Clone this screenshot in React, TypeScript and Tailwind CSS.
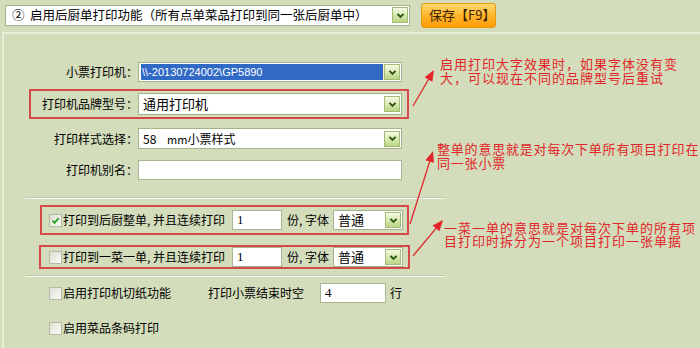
const cjk = "font-['Noto_Sans_CJK_SC','Noto_Sans',sans-serif]";

function DropBtn() {
  return (
    <span className="flex h-[16px] w-[16px] shrink-0 items-center justify-center border border-[#a3bb76] bg-gradient-to-b from-[#f6fbe2] to-[#bcd684]">
      <svg viewBox="0 0 10 10" className="h-[9px] w-[9px]">
        <path d="M1.6 3.2 L5 6.6 L8.4 3.2" fill="none" stroke="#2c5812" strokeWidth="2.2" />
      </svg>
    </span>
  );
}

function Select({ className, children }: { className: string; children?: React.ReactNode }) {
  return (
    <div className={`flex shrink-0 items-center border border-[#a2b488] bg-white pl-[2px] pr-[1px] ${className}`}>
      <div className="flex min-w-0 flex-1 items-center overflow-hidden whitespace-nowrap">{children}</div>
      <DropBtn />
    </div>
  );
}

function Input({ className, value }: { className: string; value?: string }) {
  return (
    <div className={`flex shrink-0 items-center border border-[#a8b592] bg-white pl-[4px] font-['Liberation_Serif',serif] text-[13px] text-black ${className}`}>
      {value}
    </div>
  );
}

function Check({ checked }: { checked?: boolean }) {
  return (
    <span className="flex h-[13px] w-[13px] shrink-0 items-center justify-center border border-[#b3baa5] bg-gradient-to-br from-[#dedfd4] to-[#fbfbf7]">
      {checked && (
        <svg viewBox="0 0 10 10" className="h-[9px] w-[9px]">
          <path d="M1.5 5 L4 7.6 L8.6 2.2" fill="none" stroke="#21a121" strokeWidth="2" />
        </svg>
      )}
    </span>
  );
}

function arrow(x1: number, y1: number, x2: number, y2: number) {
  const dx = x2 - x1;
  const dy = y2 - y1;
  const len = Math.hypot(dx, dy);
  const ux = dx / len;
  const uy = dy / len;
  const bx = x2 - ux * 11;
  const by = y2 - uy * 11;
  const px = -uy * 4.5;
  const py = ux * 4.5;
  return {
    line: { x1, y1, x2: bx + ux * 2, y2: by + uy * 2 },
    head: `${x2},${y2} ${bx + px},${by + py} ${bx - px},${by - py}`,
  };
}

const arrows = [arrow(413, 106, 434, 70), arrow(410, 224, 433, 151), arrow(413, 256, 443, 220)];

export default function App() {
  return (
    <div className={`relative h-[348px] w-[700px] overflow-hidden bg-[#d3ddbb] text-[12px] text-black ${cjk}`}>
      {/* top bar */}
      <div className="flex h-[30px] items-center">
        <Select className="ml-[5px] h-[21px] w-[405px] border-[#8fa170]">
          <span className="pl-[4px] text-[12.5px]">② &nbsp;启用后厨单打印功能（所有点单菜品打印到同一张后厨单中）</span>
        </Select>
        <button className="ml-[11px] flex h-[25px] w-[75px] items-center rounded-[3px] border border-[#e59a12] bg-gradient-to-b from-[#ffd86a] via-[#ffb52a] to-[#ff9c00] pl-[7px] text-[13px] text-[#3b2300]">
          保存【F9】
        </button>
      </div>

      {/* panel */}
      <div className="ml-[2px] mt-[2px] h-[320px] border-l-2 border-t-2 border-[#e8eed8]">
        <div className="mt-[28px] flex h-[20px] items-center">
          <span className="w-[134px] text-right">小票打印机：</span>
          <Select className="h-[20px] w-[264px]">
            <span className="mr-[1px] flex h-[16px] flex-1 items-center bg-[#316ac5] pl-[1px] font-['Liberation_Sans',sans-serif] text-[11px] text-white outline-1 outline-dotted outline-[#e8e0a0]">
              \\-20130724002\GP5890
            </span>
          </Select>
        </div>

        <div className="ml-[25px] mt-[7px] flex h-[30px] w-[380px] items-center border-2 border-[#d6494a]">
          <span className="w-[107px] text-right">打印机品牌型号：</span>
          <Select className="h-[22px] w-[264px]">
            <span className="pl-[2px] text-[13px]">通用打印机</span>
          </Select>
        </div>

        <div className="mt-[9px] flex h-[21px] items-center">
          <span className="w-[134px] text-right">打印样式选择：</span>
          <Select className="h-[21px] w-[264px]">
            <span className="pl-[2px] text-[12px]">58&nbsp;&nbsp;&nbsp; <span className="text-[11px]">mm</span>小票样式</span>
          </Select>
        </div>

        <div className="mt-[11px] flex h-[20px] items-center">
          <span className="w-[134px] text-right">打印机别名：</span>
          <Input className="h-[20px] w-[264px]" />
        </div>

        <div className="ml-[21px] mt-[17px] h-[2px] w-[420px] border-t border-b border-t-[#bfc9ae] border-b-[#f4f7ec]" />

        <div className="ml-[36px] mt-[6px] flex h-[30px] w-[369px] items-center border-2 border-[#d6494a] pl-[7px]">
          <Check checked />
          <span className="w-[170px] pl-[1px]">打印到后厨整单, 并且连续打印</span>
          <Input className="h-[20px] w-[50px]" value="1" />
          <span className="w-[51px] pl-[5px]">份, 字体</span>
          <Select className="h-[20px] w-[70px]">
            <span className="pl-[2px] text-[13px]">普通</span>
          </Select>
        </div>

        <div className="ml-[35px] mt-[10px] flex h-[24px] w-[371px] items-center border-2 border-[#d6494a] pl-[8px]">
          <Check />
          <span className="w-[170px] pl-[1px]">打印到一菜一单, 并且连续打印</span>
          <Input className="h-[20px] w-[50px]" value="1" />
          <span className="w-[51px] pl-[5px]">份, 字体</span>
          <Select className="h-[20px] w-[70px]">
            <span className="pl-[2px] text-[13px]">普通</span>
          </Select>
        </div>

        <div className="ml-[22px] mt-[6px] h-[2px] w-[419px] border-t border-b border-t-[#bfc9ae] border-b-[#f4f7ec]" />

        <div className="ml-[45px] mt-[6px] flex h-[20px] items-center">
          <Check />
          <span className="w-[146px] pl-[1px]">启用打印机切纸功能</span>
          <span className="w-[112px]">打印小票结束时空</span>
          <Input className="h-[20px] w-[66px]" value="4" />
          <span className="pl-[4px]">行</span>
        </div>

        <div className="ml-[45px] mt-[15px] flex h-[20px] items-center">
          <Check />
          <span className="pl-[1px]">启用菜品条码打印</span>
        </div>
      </div>

      {/* annotations */}
      <div className="absolute left-[440px] top-[57px] whitespace-nowrap text-[13px] leading-[14px] tracking-[1px] text-[#e2252a]">
        启用打印大字效果时，如果字体没有变
        <br />
        大，可以现在不同的品牌型号后重试
      </div>
      <div className="absolute left-[437px] top-[142px] whitespace-nowrap text-[13px] leading-[14px] tracking-[0.8px] text-[#e2252a]">
        整单的意思就是对每次下单所有项目打印在
        <br />
        同一张小票
      </div>
      <div className="absolute left-[444px] top-[221px] whitespace-nowrap text-[13px] leading-[13px] tracking-[1px] text-[#e2252a]">
        一菜一单的意思就是对每次下单的所有项
        <br />
        目打印时拆分为一个项目打印一张单据
      </div>

      <svg className="pointer-events-none absolute left-0 top-0 h-[348px] w-[700px]" viewBox="0 0 700 348">
        {arrows.map((a, i) => (
          <g key={i}>
            <line {...a.line} stroke="#e2252a" strokeWidth="1.3" />
            <polygon points={a.head} fill="#e2252a" />
          </g>
        ))}
      </svg>
    </div>
  );
}
